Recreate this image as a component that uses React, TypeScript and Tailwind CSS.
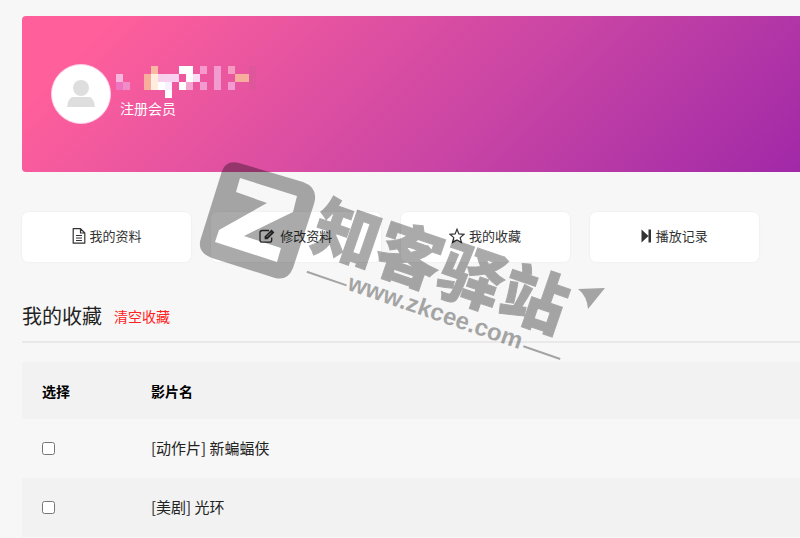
import { useState } from 'react';

const NAV_ITEMS = [
  { label: '我的资料', icon: 'file' },
  { label: '修改资料', icon: 'edit' },
  { label: '我的收藏', icon: 'star' },
  { label: '播放记录', icon: 'step' },
];

const FAVORITES = [
  { id: 1, category: '动作片', title: '新蝙蝠侠' },
  { id: 2, category: '美剧', title: '光环' },
];

// [column, row, colour] of each block that hides the user name
const MOSAIC: [number, number, string][] = [
  [5, 0, '#f9b9a0'], [9, 0, '#ffffff'], [10, 0, '#ffffff'], [12, 0, '#f59acb'], [14, 0, '#f29bd0'], [16, 0, '#f59ac0'],
  [19, 0, '#e0569d'],
  [0, 1, '#f8b8dd'], [4, 1, '#f7ae9c'], [5, 1, '#ffeede'], [6, 1, '#f8d0ec'], [7, 1, '#f8d0f0'], [8, 1, '#f8d0f0'],
  [10, 1, '#ffffff'], [11, 1, '#fbdcf4'], [14, 1, '#f29bd0'], [17, 1, '#f7ae9c'], [18, 1, '#f7ae9c'], [19, 1, '#e0569d'],
  [0, 2, '#ef74c0'], [1, 2, '#f08cc8'], [4, 2, '#f7ae9c'], [5, 2, '#ffeede'], [6, 2, '#ffffff'], [7, 2, '#f8f0ff'],
  [9, 2, '#ffffff'], [10, 2, '#f3a5d0'], [12, 2, '#f29bd0'], [14, 2, '#f29bd0'], [16, 2, '#f29bd0'], [19, 2, '#e0569d'],
  [7, 3, '#ffffff'],
];

function NavIcon({ name }: { name: string }) {
  if (name === 'edit') {
    return (
      <svg width="17" height="16" viewBox="0 0 17 16" fill="none" stroke="currentColor" strokeWidth="1.3">
        <path d="M10 2.5H3.2Q1 2.5 1 4.7V12Q1 14.2 3.2 14.2H10.5Q12.7 14.2 12.7 12V9.5" />
        <path d="M5.6 8.4L12.5 1.5L15.4 4.4L8.5 11.3H5.6Z" fill="currentColor" stroke="none" />
        <path d="M7.6 9L12 4.6" stroke="#fff" strokeWidth="0.7" />
      </svg>
    );
  }
  if (name === 'star') {
    return (
      <svg width="16" height="16" viewBox="0 0 16 16" fill="none" stroke="currentColor" strokeWidth="1.2">
        <path d="M8 1.2L9.9 5.9L15 6.3L11.2 9.6L12.4 14.6L8 11.9L3.6 14.6L4.8 9.6L1 6.3L6.1 5.9Z" />
      </svg>
    );
  }
  if (name === 'step') {
    return (
      <svg width="11" height="14" viewBox="0 0 11 14" fill="currentColor">
        <path d="M0.5 0.5L7.5 7L0.5 13.5ZM7.5 0.5H10V13.5H7.5Z" />
      </svg>
    );
  }
  return (
    <svg width="14" height="16" viewBox="0 0 14 16" fill="none" stroke="currentColor" strokeWidth="1.2">
      <path d="M1.2 0.7H8.5L12.8 5V15.2H1.2ZM8.5 0.7V5H12.8M4 7.5H10M4 10H10M4 12.5H10" strokeLinejoin="round" />
    </svg>
  );
}

function Avatar() {
  return (
    <div className="flex size-[60px] items-center justify-center rounded-full border border-pink-200 bg-white">
      <svg width="30" height="28" viewBox="0 0 30 28" className="fill-[#dedede]">
        <circle cx="15" cy="8" r="8" />
        <path d="M1 27Q2 19 6 17H24Q28 19 29 27Z" />
      </svg>
    </div>
  );
}

function Watermark() {
  return (
    <svg
      aria-hidden="true"
      width="420"
      height="220"
      viewBox="195 150 420 220"
      className="pointer-events-none absolute top-[150px] left-[195px] fill-black stroke-black opacity-[0.33]"
      strokeWidth="0"
    >
      <path
        fillRule="evenodd"
        d="M222 171Q226 160 239 163L303 182Q319 188 314 204L293 268Q288 281 275 278L212 258Q196 252 201 238ZM240 178L236 192L267 203L219 230L215 242L277 262L281 248L244 236L293 212L297 196Z"
      />
      <g transform="translate(258 220) rotate(19)">
        <text
          x="56"
          y="9"
          fontSize="66"
          fontWeight="900"
          strokeWidth="1"
          fontFamily="'Noto Sans CJK SC', sans-serif"
        >
          知客驿站
        </text>
        <text
          x="106"
          y="37"
          fontSize="24"
          fontWeight="700"
          fontFamily="'Liberation Sans', sans-serif"
        >
          www.zkcee.com
        </text>
        <path d="M63 32H105V34H63ZM292 32H331V34H292Z" />
      </g>
      <path d="M578 289L605 288L588 309Q587 296 578 289Z" />
    </svg>
  );
}

export default function App() {
  const [selected, setSelected] = useState<number[]>([]);

  const toggle = (id: number) => {
    setSelected(selected.includes(id) ? selected.filter((s) => s !== id) : [...selected, id]);
  };

  return (
    <div className="relative min-h-screen overflow-hidden bg-[#f7f7f7] pt-4 pl-[22px] font-['Noto_Sans_CJK_SC',sans-serif] text-sm text-black">
      <header className="flex h-[156px] items-center gap-[5px] rounded-l bg-linear-135 from-[#ff5f9b] from-10% to-[#a128a8] pl-[29px] text-white">
        <Avatar />
        <div className="pb-1">
          <svg width="140" height="32" viewBox="0 0 140 32" shapeRendering="crispEdges">
            {MOSAIC.map(([col, row, color]) => (
              <rect key={`${col}-${row}`} x={col * 7} y={row * 8} width="7" height="8" fill={color} />
            ))}
          </svg>
          <p className="pl-1 leading-5">注册会员</p>
        </div>
      </header>

      <nav className="mt-10 grid grid-cols-4 gap-5 pr-[41px]">
        {NAV_ITEMS.map((item) => (
          <a
            key={item.label}
            href="#"
            className="flex h-[50px] items-center justify-center gap-1 rounded-md bg-white pb-0.5 text-[13px] text-[#333] shadow-[0_0_2px_rgba(0,0,0,0.08)]"
          >
            <NavIcon name={item.icon} />
            {item.label}
          </a>
        ))}
      </nav>

      <div className="mt-9 flex h-[45px] items-center gap-3 border-b-2 border-[#e9e9e9] pb-2">
        <h2 className="text-xl text-[#222]">我的收藏</h2>
        <button type="button" className="text-sm text-[#f22]">
          清空收藏
        </button>
      </div>

      <table className="mt-[19px] w-full text-left text-[15px]">
        <thead>
          <tr className="h-[57px] bg-[#f2f2f2]">
            <th className="w-[129px] pl-5 text-sm font-bold">选择</th>
            <th className="text-sm font-bold">影片名</th>
          </tr>
        </thead>
        <tbody>
          {FAVORITES.map((item) => (
            <tr key={item.id} className="h-[59px] even:bg-[#f2f2f2]">
              <td className="pl-5">
                <input
                  type="checkbox"
                  aria-label={item.title}
                  checked={selected.includes(item.id)}
                  onChange={() => toggle(item.id)}
                  className="block size-[13px]"
                />
              </td>
              <td className="pb-0.5 text-[#222]">
                [{item.category}] {item.title}
              </td>
            </tr>
          ))}
        </tbody>
      </table>

      <Watermark />
    </div>
  );
}
